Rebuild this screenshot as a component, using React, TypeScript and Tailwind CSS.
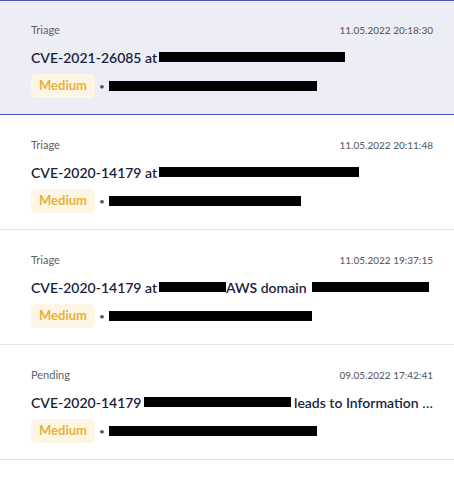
import React from 'react';

type Part = { text?: string; bar?: number; gap?: number };

type Item = {
  status: string;
  date: string;
  title: Part[];
  source: number;
  active?: boolean;
};

const ITEMS: Item[] = [
  {
    status: 'Triage',
    date: '11.05.2022 20:18:30',
    title: [{ text: 'CVE-2021-26085 at' }, { bar: 186, gap: 2 }],
    source: 208,
    active: true,
  },
  {
    status: 'Triage',
    date: '11.05.2022 20:11:48',
    title: [{ text: 'CVE-2020-14179 at' }, { bar: 200, gap: 2 }],
    source: 192,
  },
  {
    status: 'Triage',
    date: '11.05.2022 19:37:15',
    title: [
      { text: 'CVE-2020-14179 at' },
      { bar: 67, gap: 2 },
      { text: 'AWS domain' },
      { bar: 117, gap: 5 },
    ],
    source: 203,
  },
  {
    status: 'Pending',
    date: '09.05.2022 17:42:41',
    title: [
      { text: 'CVE-2020-14179' },
      { bar: 147, gap: 2 },
      { text: '\u00a0leads to Information Disclosure' },
    ],
    source: 208,
  },
];

const Redacted = ({ w, gap = 0 }: { w: number; gap?: number }) => (
  <span
    className="inline-block h-[10px] bg-black align-middle shrink-0"
    style={{ width: w, marginLeft: gap }}
  />
);

export default function App() {
  return (
    <div
      className="w-[454px] h-[494px] bg-white overflow-hidden"
      style={{ fontFamily: 'Lato, "Noto Sans", sans-serif' }}
    >
      {ITEMS.map((item, i) => (
        <div
          key={i}
          className={
            item.active
              ? 'h-[115px] pl-[31px] pr-[21px] pt-[22px] border-y border-[#4a58bd] bg-[#ecedf5]'
              : 'h-[115px] pl-[31px] pr-[21px] pt-[23px] border-b border-[#e4e4e6] bg-white'
          }
        >
          <div className="flex justify-between items-center h-[14px] text-[#606166]">
            <span className="text-[11px]">{item.status}</span>
            <span className="text-[10px] font-medium">{item.date}</span>
          </div>

          <div className="mt-[10px] h-[20px] flex items-center text-[14px] font-semibold text-[#1b1f3b] whitespace-nowrap overflow-hidden">
            {item.title.map((p, j) =>
              p.bar ? (
                <Redacted key={j} w={p.bar} gap={p.gap} />
              ) : (
                <span
                  key={j}
                  className={j === item.title.length - 1 ? 'truncate min-w-0' : 'shrink-0'}
                >
                  {p.text}
                </span>
              )
            )}
          </div>

          <div className="mt-[7px] flex items-center">
            <span className="h-[24px] w-[64px] flex items-center justify-center rounded-[5px] bg-[#fdf6e4] text-[13px] font-bold text-[#e6b23a]">
              Medium
            </span>
            <span className="ml-[4px] text-[10px] text-[#555]">•</span>
            <Redacted w={item.source} gap={4} />
          </div>
        </div>
      ))}
    </div>
  );
}
